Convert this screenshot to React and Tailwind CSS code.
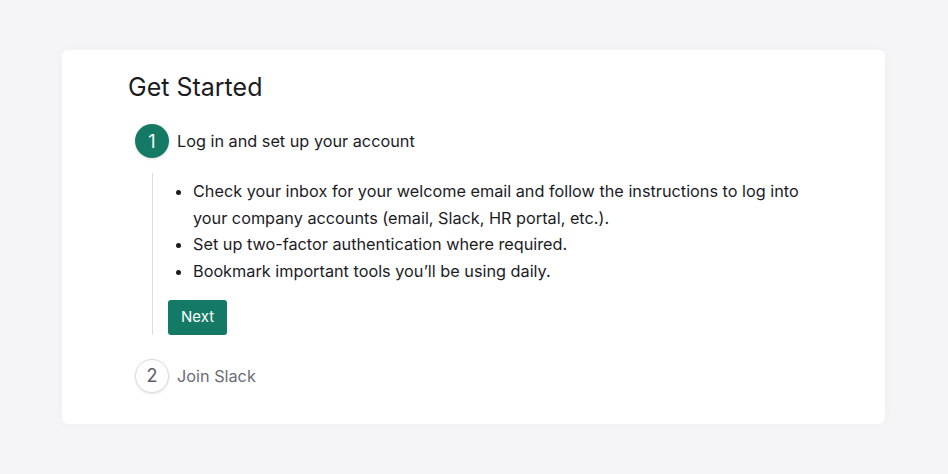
import React from 'react';

const steps = [
  { n: 1, title: 'Log in and set up your account', active: true },
  { n: 2, title: 'Join Slack', active: false },
];

const items = [
  'Check your inbox for your welcome email and follow the instructions to log into your company accounts (email, Slack, HR portal, etc.).',
  'Set up two-factor authentication where required.',
  'Bookmark important tools you\u2019ll be using daily.',
];

export default function App() {
  return (
    <div className="w-[948px] h-[474px] bg-[#f5f4f7] pt-[50px] pl-[62px] font-['Inter',sans-serif]">
      <div className="w-[823px] h-[374px] bg-white rounded-[6px] shadow-[0_0_12px_rgba(0,0,0,0.03)] pl-[66px] pt-[21px]">
        <h1 className="text-[25px] leading-[32px] text-[#1c1c1f]">Get Started</h1>

        <div className="mt-[21px] pl-[7px]">
          {/* Step 1 */}
          <div className="flex items-center gap-[8px]">
            <div className="w-[34px] h-[34px] rounded-full bg-[#147a66] text-white flex items-center justify-center text-[18px] shadow-[0_1px_3px_rgba(0,0,0,0.15)]">
              1
            </div>
            <span className="text-[16.25px] text-[#1c1c1f]">{steps[0].title}</span>
          </div>

          {/* Step 1 content */}
          <div className="ml-[17px] mt-[15px] border-l border-[#dcdce3] pl-[15px] pt-[5px]">
            <ul className="list-disc pl-[25px] text-[16.25px] leading-[26.7px] text-[#1c1c1f] max-w-[650px]">
              {items.map((t) => (
                <li key={t}>{t}</li>
              ))}
            </ul>
            <button className="mt-[15px] h-[35px] w-[59px] rounded-[3px] bg-[#147a66] text-white text-[15px] font-normal">
              Next
            </button>
          </div>

          {/* Step 2 */}
          <div className="flex items-center gap-[8px] mt-[24px]">
            <div className="w-[34px] h-[34px] rounded-full bg-white border border-[#dcdce0] text-[#5d5d66] flex items-center justify-center text-[18px] shadow-[0_1px_3px_rgba(0,0,0,0.1)]">
              2
            </div>
            <span className="text-[16.25px] text-[#6b6b73]">{steps[1].title}</span>
          </div>
        </div>
      </div>
    </div>
  );
}
